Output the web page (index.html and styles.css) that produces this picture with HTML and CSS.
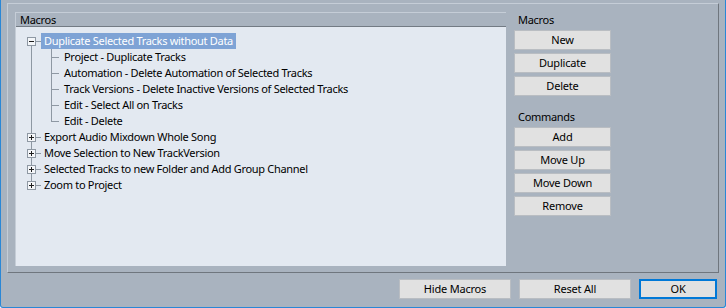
FILE: index.html
```html
<!DOCTYPE html>
<html lang="en">
<head>
    <meta charset="UTF-8">
    <title>Macros</title>
    <link rel="stylesheet" href="styles.css">
</head>
<body>
    <div class="window">
        <div class="panel">
            <!-- Macro tree -->
            <div class="macro-list">
                <div class="list-head">Macros</div>
                <ul class="tree">
                    <li class="row first">
                        <span class="cell node"><span class="box minus"></span></span>
                        <span class="label selected">Duplicate Selected Tracks without Data</span>
                    </li>
                    <li class="row">
                        <span class="cell pipe"></span><span class="cell tee"></span>
                        <span class="label">Project - Duplicate Tracks</span>
                    </li>
                    <li class="row">
                        <span class="cell pipe"></span><span class="cell tee"></span>
                        <span class="label">Automation - Delete Automation of Selected Tracks</span>
                    </li>
                    <li class="row">
                        <span class="cell pipe"></span><span class="cell tee"></span>
                        <span class="label">Track Versions - Delete Inactive Versions of Selected Tracks</span>
                    </li>
                    <li class="row">
                        <span class="cell pipe"></span><span class="cell tee"></span>
                        <span class="label">Edit - Select All on Tracks</span>
                    </li>
                    <li class="row">
                        <span class="cell pipe"></span><span class="cell elbow"></span>
                        <span class="label">Edit - Delete</span>
                    </li>
                    <li class="row">
                        <span class="cell node"><span class="box plus"></span></span>
                        <span class="label">Export Audio Mixdown Whole Song</span>
                    </li>
                    <li class="row">
                        <span class="cell node"><span class="box plus"></span></span>
                        <span class="label">Move Selection to New TrackVersion</span>
                    </li>
                    <li class="row">
                        <span class="cell node"><span class="box plus"></span></span>
                        <span class="label">Selected Tracks to new Folder and Add Group Channel</span>
                    </li>
                    <li class="row last">
                        <span class="cell node"><span class="box plus"></span></span>
                        <span class="label">Zoom to Project</span>
                    </li>
                </ul>
            </div>

            <!-- Side buttons -->
            <div class="side">
                <div class="side-title">Macros</div>
                <button class="btn">New</button>
                <button class="btn">Duplicate</button>
                <button class="btn">Delete</button>

                <div class="side-title commands">Commands</div>
                <button class="btn">Add</button>
                <button class="btn">Move Up</button>
                <button class="btn">Move Down</button>
                <button class="btn">Remove</button>
            </div>
        </div>

        <div class="footer">
            <button class="btn wide">Hide Macros</button>
            <button class="btn wide">Reset All</button>
            <button class="btn ok">OK</button>
        </div>
    </div>
</body>
</html>
```

FILE: styles.css
```css
* {
    box-sizing: border-box;
}

html, body {
    margin: 0;
}

body {
    width: 726px;
    height: 308px;
    overflow: hidden;
    font-family: "Segoe UI", "Noto Sans", sans-serif;
    font-size: 11px;
    letter-spacing: -0.3px;
    color: #000;
}

.window {
    height: 308px;
    background: #a9b3bf;
    border: 1px solid #2a87d6;
    border-top: none;
    border-radius: 0 0 3px 3px;
    padding: 3px 6px 0;
}

.panel {
    height: 270px;
    display: flex;
    gap: 8px;
    padding: 8px 0 0 7px;
    border: 1px solid;
    border-color: #c5cdd7 #6f767e #6f767e #c5cdd7;
}

/* tree */

.macro-list {
    width: 491px;
    height: 254px;
    display: flex;
    flex-direction: column;
    border-left: 1px solid #c5cdd7;
}

.list-head {
    height: 15px;
    line-height: 13px;
    padding-left: 4px;
    border-top: 1px solid #c5cdd7;
    border-bottom: 1px solid #737b84;
}

.tree {
    flex: 1;
    list-style: none;
    margin: 0;
    padding: 6px 0 0 7px;
    background: #e3e9f1;
}

.row {
    display: flex;
    height: 16px;
    line-height: 16px;
    white-space: nowrap;
}

.cell {
    flex: none;
    height: 16px;
}

.node {
    width: 18px;
    background:
        linear-gradient(#8e98a3, #8e98a3) 8px 0 / 1px 100% no-repeat,
        linear-gradient(#8e98a3, #8e98a3) 13px 8px / 5px 1px no-repeat;
}

.first .node {
    background:
        linear-gradient(#8e98a3, #8e98a3) 8px 8px / 1px 8px no-repeat,
        linear-gradient(#8e98a3, #8e98a3) 13px 8px / 5px 1px no-repeat;
}

.last .node {
    background:
        linear-gradient(#8e98a3, #8e98a3) 8px 0 / 1px 8px no-repeat,
        linear-gradient(#8e98a3, #8e98a3) 13px 8px / 5px 1px no-repeat;
}

.box {
    display: block;
    width: 9px;
    height: 9px;
    margin: 4px 0 0 4px;
    border: 1px solid #8e98a3;
    background-color: #f4f6f9;
}

.box.minus {
    background-image: linear-gradient(#1e1e1e, #1e1e1e);
    background-position: 1px 3px;
    background-size: 5px 1px;
    background-repeat: no-repeat;
}

.box.plus {
    background-image: linear-gradient(#1e1e1e, #1e1e1e), linear-gradient(#1e1e1e, #1e1e1e);
    background-position: 1px 3px, 3px 1px;
    background-size: 5px 1px, 1px 5px;
    background-repeat: no-repeat;
}

.pipe {
    width: 18px;
    background: linear-gradient(#8e98a3, #8e98a3) 8px 0 / 1px 100% no-repeat;
}

.tee {
    width: 20px;
    background:
        linear-gradient(#8e98a3, #8e98a3) 10px 0 / 1px 100% no-repeat,
        linear-gradient(#8e98a3, #8e98a3) 10px 8px / 8px 1px no-repeat;
}

.elbow {
    width: 20px;
    background:
        linear-gradient(#8e98a3, #8e98a3) 10px 0 / 1px 9px no-repeat,
        linear-gradient(#8e98a3, #8e98a3) 10px 8px / 8px 1px no-repeat;
}

.label {
    padding: 0 3px;
}

.label.selected {
    background: #7ea3d5;
    color: #fff;
}

/* side column */

.side {
    width: 97px;
    display: flex;
    flex-direction: column;
    gap: 3px;
}

.side-title {
    height: 16px;
    line-height: 16px;
    padding-left: 4px;
    margin-bottom: -1px;
}

.side-title.commands {
    margin-top: 10px;
}

.btn {
    height: 20px;
    padding: 0;
    font-family: inherit;
    font-size: 11px;
    letter-spacing: -0.2px;
    line-height: 18px;
    color: #000;
    background: #e1e1e1;
    border: 1px solid #b9bdc2;
}

.footer {
    display: flex;
    justify-content: flex-end;
    gap: 8px;
    padding: 6px 2px 0 0;
}

.btn.wide {
    width: 112px;
}

.btn.ok {
    width: 78px;
    border: 2px solid #0078d7;
    line-height: 16px;
}
```
